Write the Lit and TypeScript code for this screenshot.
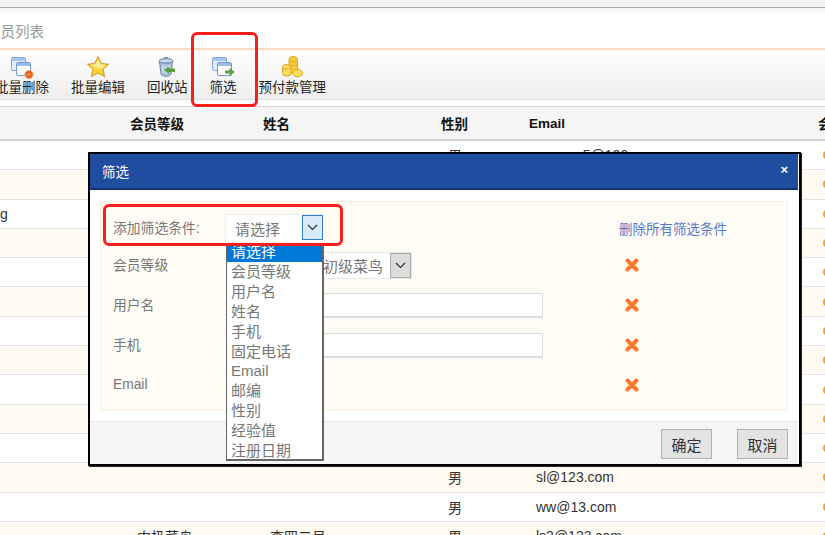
import { LitElement, html, css } from "lit";
import { customElement } from "lit/decorators.js";

const chevron = html`<svg width="11" height="7" viewBox="0 0 11 7"><path d="M1 1l4.5 4.5L10 1" fill="none" stroke="#333" stroke-width="1.2"/></svg>`;

const windowIcon = (badge: unknown) => html`<svg width="24" height="24" viewBox="0 0 24 24">
  <rect x="1.5" y="2.5" width="14" height="13" rx="1.5" fill="#e4eefa" stroke="#7fa6dc"/>
  <rect x="2" y="3" width="13" height="3" fill="#a9c6ec"/>
  <rect x="6.5" y="7.5" width="14" height="13" rx="1.5" fill="#fff" stroke="#6f97d2"/>
  <rect x="7" y="8" width="13" height="3" fill="#9dbde8"/>
  ${badge}
</svg>`;

const icons = {
  remove: windowIcon(html`<svg x="0" y="0" width="24" height="24"><circle cx="19" cy="19.5" r="4.2" fill="#e2661c" stroke="#f5b58a"/><circle cx="19" cy="19.5" r="1.6" fill="#f08a45"/></svg>`),
  star: html`<svg width="24" height="24" viewBox="0 0 24 24">
    <path d="M12 1.5l3.2 6.9 7.3.9-5.4 5 1.5 7.4L12 18.1l-6.6 3.6 1.5-7.4-5.4-5 7.3-.9z" fill="#fbd334" stroke="#c9962c" stroke-linejoin="round"/>
    <path d="M12 4l2.4 5.3 5.4.7-4 3.7-6-1.5-4.6-2.2 4.2-.7z" fill="#ffee9a"/>
  </svg>`,
  trash: html`<svg width="24" height="24" viewBox="0 0 24 24">
    <ellipse cx="11" cy="6" rx="7" ry="2.4" fill="#c9d6e6" stroke="#6d87a8"/>
    <path d="M8.5 4l1-1.5h3l1 1.5" fill="none" stroke="#6d87a8"/>
    <path d="M4.5 7l1.5 12c.2 1.4 2.4 2.2 5 2.2s4.8-.8 5-2.2L17.500 7c-2 1.500-11 1.500-13 0z" fill="#a9bfd9" stroke="#6d87a8"/>
    <path d="M8 10v8M11 10.500v8.500M14 10v8" stroke="#eef3f9"/>
    <path d="M9 15l5-3.500v2h6v3.500h-6v2z" fill="#5aa03c"/>
  </svg>`,
  filter: windowIcon(html`<svg x="0" y="0" width="24" height="24"><path d="M14 15.500h4.500V12.500l5 4.500-5 4.500v-3H14z" fill="#5f9e4a"/></svg>`),
  coins: html`<svg width="24" height="24" viewBox="0 0 24 24">
    <rect x="9" y="1.500" width="8.500" height="16" rx="3.500" fill="#f7cc3c" stroke="#d9a520"/>
    <path d="M9.500 6.500h7.500M9.500 10.500h7.500" stroke="#e0ae28"/>
    <rect x="2.500" y="9.500" width="8.500" height="11.500" rx="3.500" fill="#fbdc62" stroke="#d9a520"/>
    <path d="M3 14h7.500" stroke="#e0ae28"/>
    <ellipse cx="17.500" cy="18" rx="5" ry="3.800" fill="#fbdc62" stroke="#d9a520"/>
  </svg>`,
};

const removeIcon = html`<svg class="x" width="14" height="14" viewBox="0 0 14 14"><path d="M2.500 2.500l9 9M11.500 2.500l-9 9" stroke="#f47a30" stroke-width="4" stroke-linecap="round"/></svg>`;

const tools = [
  { label: "批量删除", icon: icons.remove },
  { label: "批量编辑", icon: icons.star },
  { label: "回收站", icon: icons.trash },
  { label: "筛选", icon: icons.filter },
  { label: "预付款管理", icon: icons.coins },
];

// most rows sit behind the dialog, only these show any text
const rows: Record<number, string[]> = {
  0: ["", "", "", "男", "aaaaaa5@126.com"],
  2: ["g", "", "", "", ""],
  11: ["", "", "", "男", "sl@123.com"],
  12: ["", "", "", "男", "ww@13.com"],
  13: ["", "中极菜鸟", "李四二号", "男", "ls2@123.com"],
};

const options = ["会员等级", "用户名", "姓名", "手机", "固定电话", "Email", "邮编", "性别", "经验值", "注册日期"];

@customElement("app-root")
export class AppRoot extends LitElement {
  static styles = css`
    :host {
      display: block;
      position: relative;
      width: 825px;
      height: 535px;
      overflow: hidden;
      background: #fff;
      font-family: "Liberation Sans", "Noto Sans CJK SC", sans-serif;
      font-size: 14px;
      color: #333;
    }

    .top {
      height: 8px;
      box-sizing: border-box;
      background: #f1f1f1;
      border-bottom: 1px solid #a9a9a9;
    }

    .title {
      height: 40px;
      margin-left: -14px;
      display: flex;
      align-items: center;
      padding-top: 4px;
      box-sizing: border-box;
      font-size: 14.500px;
      color: #999;
      background: linear-gradient(#f4f4f4, #fff 8px);
    }

    .orange {
      height: 2px;
      background: #f9dcc0;
    }

    .toolbar {
      height: 50px;
      box-sizing: border-box;
      display: flex;
      gap: 22px;
      margin-left: -5px;
      padding-top: 5px;
      background: linear-gradient(#fff, #eee);
      border-bottom: 1px solid #ddd;
    }

    .tool {
      display: flex;
      flex-direction: column;
      align-items: center;
      font-size: 13.500px;
      line-height: 18px;
      color: #222;
      white-space: nowrap;
    }

    .tool svg {
      display: block;
    }

    .gap {
      height: 6px;
    }

    .head,
    .row {
      display: grid;
      grid-template-columns: 130px 133px 178px 88px 289px 7px;
      align-items: center;
      box-sizing: border-box;
      white-space: nowrap;
    }

    .head {
      height: 35px;
      background: #f5f5f5;
      border-top: 1px solid #d8d8d8;
      border-bottom: 2px solid #d4d4d4;
      font-size: 13.500px;
      font-weight: bold;
      color: #111;
    }

    .row {
      height: 29.300px;
      border-bottom: 1px solid #e4e4e4;
      padding-left: 0;
    }

    .row:nth-child(even) {
      background: #fffbf2;
    }

    .row span {
      padding-left: 7px;
    }

    .row span:first-child {
      padding-left: 0;
    }

    .dot {
      display: block;
      width: 6px;
      height: 8px;
      margin-left: 5px;
      border-radius: 50%;
      background: #f5a030;
    }

    .modal {
      position: absolute;
      left: 88px;
      top: 152px;
      width: 713px;
      height: 314px;
      box-sizing: border-box;
      border: 2px solid #000;
      box-shadow: 1px 1px 0 #222;
      background: #fff;
      display: flex;
      flex-direction: column;
    }

    .modal-head {
      height: 36px;
      flex: none;
      box-sizing: border-box;
      display: flex;
      align-items: center;
      justify-content: space-between;
      padding: 0 10px 0 12px;
      background: #1f4ea1;
      border-bottom: 2px solid #12336f;
      margin-right: 1px;
      color: #fff;
      font-size: 13.500px;
    }

    .close {
      font-size: 13px;
      font-weight: bold;
      line-height: 1;
      margin-top: -4px;
    }

    .panel {
      flex: none;
      height: 209px;
      margin: 11px 11px 11px 10px;
      box-sizing: border-box;
      padding-top: 9px;
      border: 1px solid #fbeedd;
      background: #fffcf5;
      display: grid;
      grid-template-columns: 125px 393px 1fr;
      grid-template-rows: 34px repeat(4, 40px);
      align-items: center;
      font-size: 13.800px;
      color: #777;
    }

    .panel label {
      padding-left: 12px;
      margin-top: -2px;
    }

    .link {
      color: #5578cc;
      font-size: 13.500px;
      white-space: nowrap;
    }

    .x {
      display: block;
      margin-left: 6px;
    }

    .picker {
      width: 98px;
      height: 29px;
      margin-left: -1px;
      display: flex;
      align-items: flex-start;
      justify-content: space-between;
      box-sizing: border-box;
      background: #fff;
      border: 1px solid #eee;
      border-right: 0;
      font-size: 15px;
      line-height: 29px;
      padding-left: 9px;
      color: #777;
    }

    .picker i {
      width: 21px;
      height: 25px;
      box-sizing: border-box;
      display: flex;
      align-items: center;
      justify-content: center;
      background: #d8ebfa;
      border: 1px solid #2f7fd0;
    }

    .level {
      width: 186px;
      height: 27px;
      box-sizing: border-box;
      display: flex;
      align-items: center;
      justify-content: flex-end;
      gap: 7px;
      background: #fff;
      border: 1px solid #e8e8e8;
      font-size: 15px;
    }

    .level i {
      width: 21px;
      height: 25px;
      box-sizing: border-box;
      display: flex;
      align-items: center;
      justify-content: center;
      background: #dcdcdc;
      border: 1px solid #aaa;
    }

    .text {
      width: 317px;
      height: 25px;
      box-sizing: border-box;
      background: #fff;
      border: 1px solid #ddd;
      border-bottom-width: 2px;
    }

    .menu {
      position: absolute;
      left: 136px;
      top: 91px;
      width: 98px;
      height: 216px;
      box-sizing: border-box;
      background: #fff;
      border: 1px solid #666;
      border-right-width: 2px;
      border-bottom-width: 2px;
      font-size: 15px;
      color: #777;
    }

    .menu div {
      height: 19.900px;
      line-height: 19.900px;
      padding-left: 4px;
    }

    .menu .selected {
      height: 16px;
      line-height: 12px;
      overflow: hidden;
      background: #0078d7;
      color: #fff;
    }

    .foot {
      flex: 1;
      display: flex;
      justify-content: flex-end;
      gap: 25px;
      padding: 7px 10px 0 0;
      background: #f5f5f5;
      border-top: 1px solid #e8e8e8;
      margin-right: 1px;
    }

    .btn {
      width: 51px;
      height: 30px;
      box-sizing: border-box;
      display: flex;
      align-items: center;
      justify-content: center;
      background: #e3e3e3;
      border: 1px solid #b0b0b0;
      font-size: 15px;
      color: #333;
    }

    .mark {
      position: absolute;
      box-sizing: border-box;
      border: 3px solid #f5201c;
      border-radius: 6px;
    }

    .mark-tool {
      left: 191px;
      top: 32px;
      width: 67px;
      height: 75px;
    }

    .mark-add {
      left: 103px;
      top: 204px;
      width: 240px;
      height: 42px;
    }
  `;

  render() {
    return html`
      <div class="top"></div>
      <div class="title">会员列表</div>
      <div class="orange"></div>
      <div class="toolbar">
        ${tools.map((t) => html`<div class="tool">${t.icon}<span>${t.label}</span></div>`)}
      </div>
      <div class="gap"></div>
      <div class="head">
        <span></span><span>会员等级</span><span>姓名</span><span>性别</span><span>Email</span><span>会</span>
      </div>
      <div class="rows">
        ${Array.from({ length: 14 }, (_, i) => {
          const cells = rows[i] ?? ["", "", "", "", ""];
          return html`<div class="row">
            ${cells.map((c) => html`<span>${c}</span>`)}
            <b class="dot"></b>
          </div>`;
        })}
      </div>

      <div class="modal">
        <div class="modal-head"><span>筛选</span><span class="close">×</span></div>
        <div class="panel">
          <label>添加筛选条件:</label>
          <div class="picker"><span>请选择</span><i>${chevron}</i></div>
          <a class="link">删除所有筛选条件</a>

          <label>会员等级</label>
          <div class="level"><span>初级菜鸟</span><i>${chevron}</i></div>
          ${removeIcon}

          <label>用户名</label>
          <div class="text"></div>
          ${removeIcon}

          <label>手机</label>
          <div class="text"></div>
          ${removeIcon}

          <label>Email</label>
          <div></div>
          ${removeIcon}
        </div>
        <div class="foot">
          <div class="btn">确定</div>
          <div class="btn">取消</div>
        </div>
        <div class="menu">
          <div class="selected">请选择</div>
          ${options.map((o) => html`<div>${o}</div>`)}
        </div>
      </div>

      <div class="mark mark-tool"></div>
      <div class="mark mark-add"></div>
    `;
  }
}

declare global {
  interface HTMLElementTagNameMap {
    "app-root": AppRoot;
  }
}
